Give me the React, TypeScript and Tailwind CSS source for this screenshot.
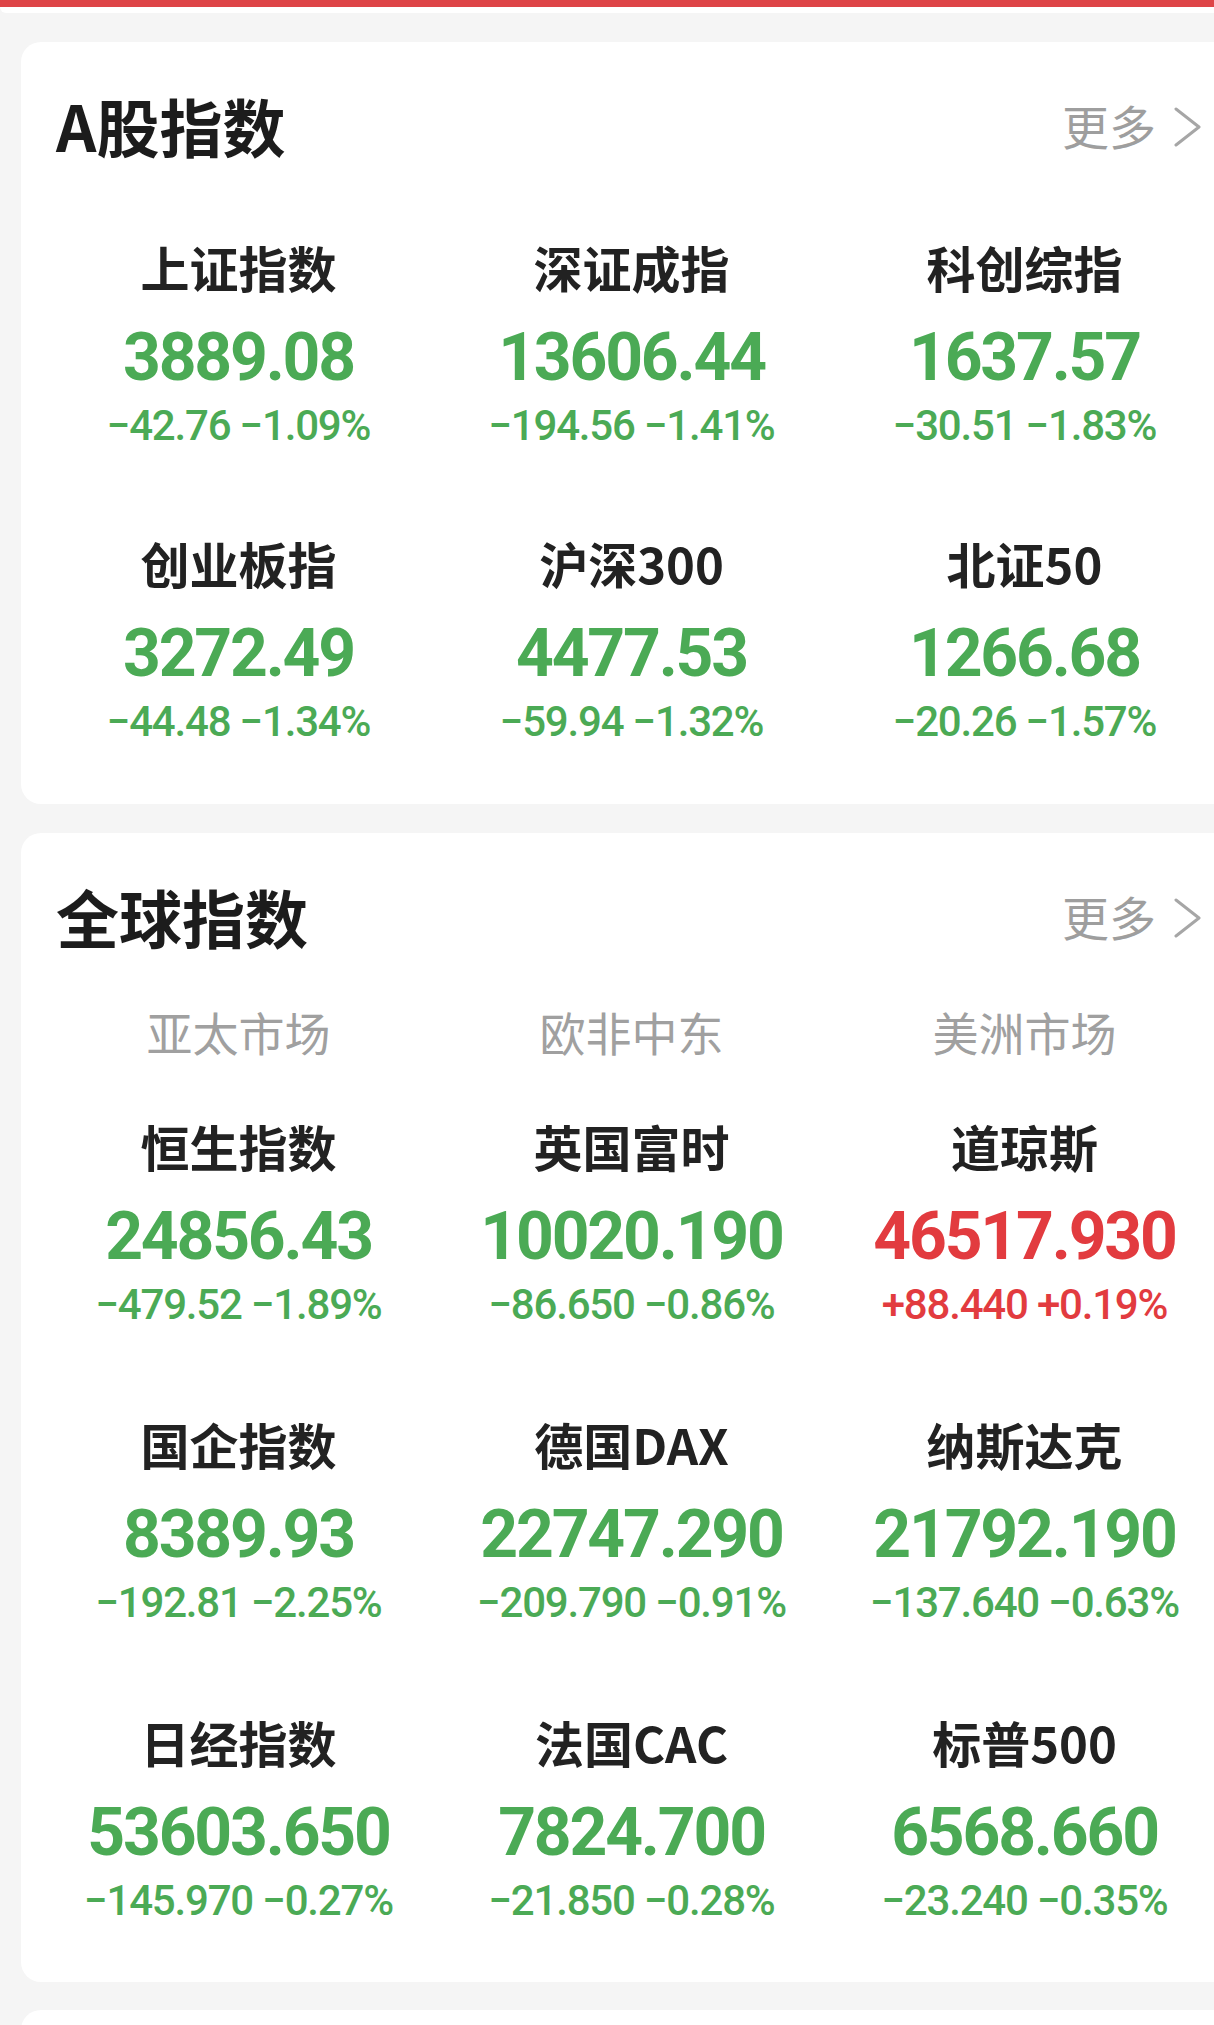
type Quote = {
  name: string
  price: string
  change: string
  pct: string
  up?: boolean
}

const aShares: Quote[] = [
  { name: '上证指数', price: '3889.08', change: '−42.76', pct: '−1.09%' },
  { name: '深证成指', price: '13606.44', change: '−194.56', pct: '−1.41%' },
  { name: '科创综指', price: '1637.57', change: '−30.51', pct: '−1.83%' },
  { name: '创业板指', price: '3272.49', change: '−44.48', pct: '−1.34%' },
  { name: '沪深300', price: '4477.53', change: '−59.94', pct: '−1.32%' },
  { name: '北证50', price: '1266.68', change: '−20.26', pct: '−1.57%' },
]

const globalIdx: Quote[] = [
  { name: '恒生指数', price: '24856.43', change: '−479.52', pct: '−1.89%' },
  { name: '英国富时', price: '10020.190', change: '−86.650', pct: '−0.86%' },
  { name: '道琼斯', price: '46517.930', change: '+88.440', pct: '+0.19%', up: true },
  { name: '国企指数', price: '8389.93', change: '−192.81', pct: '−2.25%' },
  { name: '德国DAX', price: '22747.290', change: '−209.790', pct: '−0.91%' },
  { name: '纳斯达克', price: '21792.190', change: '−137.640', pct: '−0.63%' },
  { name: '日经指数', price: '53603.650', change: '−145.970', pct: '−0.27%' },
  { name: '法国CAC', price: '7824.700', change: '−21.850', pct: '−0.28%' },
  { name: '标普500', price: '6568.660', change: '−23.240', pct: '−0.35%' },
]

const markets = ['亚太市场', '欧非中东', '美洲市场']

function CardHeader({ title }: { title: string }) {
  return (
    <div className="flex items-center justify-between pl-[35px] pr-[60px]">
      <h2 className="text-[63px] leading-none font-bold text-[#1c1c1c]">{title}</h2>
      <a href="#" className="flex items-center text-[47px] leading-none text-[#9e9e9e]">
        更多
        <svg className="mt-[6px] ml-[18px] h-[40px] w-[27px]" viewBox="0 0 27 40" fill="none" aria-hidden>
          <polyline points="2,2 25,20 2,38" stroke="#a6a6a6" strokeWidth="3" strokeLinecap="round" strokeLinejoin="round" />
        </svg>
      </a>
    </div>
  )
}

function QuoteCell({ q }: { q: Quote }) {
  const color = q.up ? 'text-[#e23b3f]' : 'text-[#4baa55]'
  return (
    <div className="flex flex-col items-center whitespace-nowrap">
      <div className="h-[60px] text-[49px] leading-[54px] font-bold text-[#222]">{q.name}</div>
      <div className={`mt-[23px] h-[70px] font-['Roboto',sans-serif] text-[66px] leading-[70px] font-bold tracking-[-2.2px] ${color}`}>
        {q.price}
      </div>
      <div className={`mt-[11px] h-[44px] font-['Roboto',sans-serif] text-[42px] leading-[44px] font-medium tracking-[-1.2px] ${color}`}>
        {q.change} {q.pct}
      </div>
    </div>
  )
}

export default function App() {
  return (
    <div className="h-[2025px] w-[1214px] overflow-hidden bg-[#f5f5f5] font-['Noto_Sans_CJK_SC','Noto_Sans',sans-serif]">
      <div className="h-[7px] bg-[#de4447]" />
      <div className="h-[6px] rounded-bl-[12px] bg-white" />

      <section className="mt-[29px] ml-[21px] w-[1240px] rounded-[20px] bg-white pb-[60px]">
        <div className="flex h-[164px] flex-col justify-center">
          <CardHeader title="A股指数" />
        </div>
        <div className="mt-[34px] grid grid-cols-[393px_393px_393px] gap-y-[88px] pl-[21px]">
          {aShares.map((q) => (
            <QuoteCell key={q.name} q={q} />
          ))}
        </div>
      </section>

      <section className="mt-[29px] ml-[21px] w-[1240px] rounded-[20px] bg-white pb-[59px]">
        <div className="flex h-[164px] flex-col justify-center">
          <CardHeader title="全球指数" />
        </div>
        <div className="mt-[12px] grid grid-cols-[393px_393px_393px] pl-[21px]">
          {markets.map((m) => (
            <div key={m} className="h-[50px] text-center text-[46px] leading-[45px] text-[#a0a0a0]">
              {m}
            </div>
          ))}
        </div>
        <div className="mt-[60px] grid grid-cols-[393px_393px_393px] gap-y-[90px] pl-[21px]">
          {globalIdx.map((q) => (
            <QuoteCell key={q.name} q={q} />
          ))}
        </div>
      </section>

      <section className="mt-[28px] ml-[21px] h-[200px] w-[1240px] rounded-[20px] bg-white" />
    </div>
  )
}
